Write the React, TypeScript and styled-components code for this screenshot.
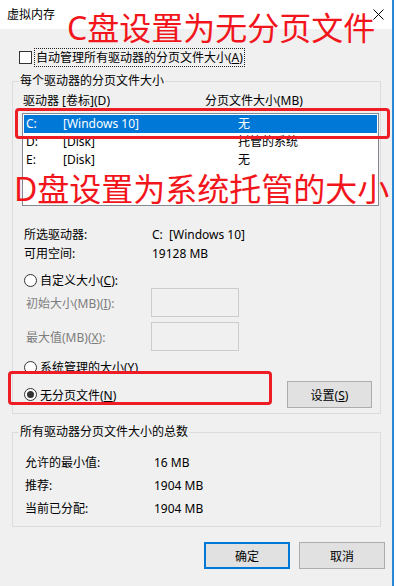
import React from "react";
import styled, { createGlobalStyle } from "styled-components";

const GlobalStyle = createGlobalStyle`
	html, body {
		margin: 0;
		padding: 0;
		background: #ffffff;
	}
	body {
		font-family: "Noto Sans", "Noto Sans CJK SC", sans-serif;
		font-size: 12px;
		color: #000000;
	}
`;

const Screen = styled.div`
	position: relative;
	width: 396px;
	height: 586px;
	display: flex;
	overflow: hidden;
	background: #ffffff;
`;

const Window = styled.div`
	width: 392px;
	display: flex;
	flex-direction: column;
`;

const Edge = styled.div`
	width: 2px;
	background: #2b86d6;
`;

const TitleBar = styled.div`
	height: 29px;
	box-sizing: border-box;
	background: #ffffff;
	display: flex;
	align-items: center;
	justify-content: space-between;
	padding: 0 8px 1px 7px;
`;

const Body = styled.div`
	flex: 1;
	background: #f0f0f0;
	padding-left: 12px;
	display: flex;
	flex-direction: column;
`;

const CheckRow = styled.div`
	margin-top: 19px;
	height: 19px;
	display: flex;
	align-items: center;
	padding-left: 7px;
`;

const CheckBox = styled.span`
	width: 13px;
	height: 13px;
	box-sizing: border-box;
	border: 1px solid #333333;
	background: #ffffff;
`;

const FocusLabel = styled.span`
	margin-left: 2px;
	height: 19px;
	box-sizing: border-box;
	border: 1px dotted #222222;
	padding: 0 1px;
	line-height: 17px;
`;

const GroupBox = styled.div<{ $top: number; $pad: string }>`
	margin-top: ${p => p.$top}px;
	width: 369px;
	box-sizing: border-box;
	border: 1px solid #dcdcdc;
	padding: ${p => p.$pad};
	display: flex;
	flex-direction: column;
`;

const GroupTitle = styled.div`
	margin: -9px 0 0 -3px;
	padding: 0 1px;
	height: 16px;
	line-height: 16px;
	width: fit-content;
	background: #f0f0f0;
`;

const HeaderRow = styled.div`
	margin-top: 4px;
	height: 16px;
	line-height: 16px;
	padding-left: 1px;
	display: grid;
	grid-template-columns: 182px 1fr;
`;

const ListBox = styled.div`
	margin-top: 4px;
	height: 93px;
	box-sizing: border-box;
	border: 1px solid #828790;
	background: #ffffff;
	padding: 1px;
`;

const ListRow = styled.div<{ $selected?: boolean }>`
	height: 18px;
	line-height: 18px;
	padding-left: 2px;
	display: grid;
	grid-template-columns: 37px 175px 1fr;
	background: ${p => (p.$selected ? "#0078d7" : "transparent")};
	color: ${p => (p.$selected ? "#ffffff" : "#000000")};
`;

const InfoRow = styled.div<{ $top?: number; $h: number; $indent: number; $col: number }>`
	margin-top: ${p => p.$top ?? 0}px;
	height: ${p => p.$h}px;
	line-height: ${p => p.$h}px;
	padding-left: ${p => p.$indent}px;
	display: grid;
	grid-template-columns: ${p => p.$col}px 1fr;
`;

const RadioRow = styled.div<{ $top: number; $h: number }>`
	margin-top: ${p => p.$top}px;
	height: ${p => p.$h}px;
	display: flex;
	align-items: center;
	padding-left: 2px;
`;

const Radio = styled.span<{ $checked?: boolean }>`
	width: 13px;
	height: 13px;
	box-sizing: border-box;
	border-radius: 50%;
	border: 1px solid #333333;
	background: #ffffff;
	margin-right: 3px;
	display: flex;
	align-items: center;
	justify-content: center;
	&::after {
		content: "";
		width: 7px;
		height: 7px;
		border-radius: 50%;
		background: ${p => (p.$checked ? "#333333" : "transparent")};
	}
`;

const FieldRow = styled.div<{ $top: number }>`
	margin-top: ${p => p.$top}px;
	height: 29px;
	display: flex;
	align-items: center;
	padding-left: 4px;
`;

const FieldLabel = styled.span`
	width: 125px;
	color: #7d7d7d;
`;

const FieldInput = styled.span`
	width: 88px;
	height: 29px;
	box-sizing: border-box;
	border: 1px solid #cccccc;
	background: #f0f0f0;
`;

const Button = styled.button<{ $default?: boolean; $w: number }>`
	width: ${p => p.$w}px;
	height: 27px;
	box-sizing: border-box;
	margin: 0;
	padding: 0;
	font-family: inherit;
	font-size: 12px;
	color: #000000;
	background: #e1e1e1;
	border: ${p => (p.$default ? "2px solid #0078d7" : "1px solid #adadad")};
	border-radius: 0;
`;

const SetButton = styled(Button)`
	margin-left: auto;
	margin-right: 7px;
`;

const ButtonRow = styled.div`
	margin-top: 15px;
	display: flex;
	justify-content: flex-end;
	gap: 9px;
	padding-right: 7px;
`;

const RedFrame = styled.div<{ $x: number; $y: number; $w: number; $h: number }>`
	position: absolute;
	left: ${p => p.$x}px;
	top: ${p => p.$y}px;
	width: ${p => p.$w}px;
	height: ${p => p.$h}px;
	box-sizing: border-box;
	border: 3px solid #ee1c24;
	border-radius: 4px;
`;

const RedNote = styled.div<{ $x: number; $y: number }>`
	position: absolute;
	left: ${p => p.$x}px;
	top: ${p => p.$y}px;
	font-family: "Noto Sans", "Noto Sans CJK SC", sans-serif;
	font-size: 32px;
	line-height: 32px;
	color: #f2161c;
	white-space: nowrap;
`;

const CloseIcon = () => (
	<svg width="11" height="11" viewBox="0 0 11 11">
		<path d="M0.5 0.5 L10.5 10.5 M10.5 0.5 L0.5 10.5" stroke="#000" strokeWidth="1" />
	</svg>
);

const drives = [
	{ letter: "C:", label: "[Windows 10]", size: "无", selected: true },
	{ letter: "D:", label: "[Disk]", size: "托管的系统" },
	{ letter: "E:", label: "[Disk]", size: "无" },
];

export default function App() {
	return (
		<Screen>
			<GlobalStyle />
			<Window>
				<TitleBar>
					<span>虚拟内存</span>
					<CloseIcon />
				</TitleBar>
				<Body>
					<CheckRow>
						<CheckBox />
						<FocusLabel>
							自动管理所有驱动器的分页文件大小(<u>A</u>)
						</FocusLabel>
					</CheckRow>

					<GroupBox $top={14} $pad="0 1px 5px 9px">
						<GroupTitle>每个驱动器的分页文件大小</GroupTitle>
						<HeaderRow>
							<span>驱动器 [卷标](D)</span>
							<span>分页文件大小(MB)</span>
						</HeaderRow>
						<ListBox>
							{drives.map(d => (
								<ListRow key={d.letter} $selected={d.selected}>
									<span>{d.letter}</span>
									<span>{d.label}</span>
									<span>{d.size}</span>
								</ListRow>
							))}
						</ListBox>
						<InfoRow $top={19} $h={19} $indent={2} $col={128}>
							<span>所选驱动器:</span>
							<span>C:&nbsp;&nbsp;[Windows 10]</span>
						</InfoRow>
						<InfoRow $h={19} $indent={2} $col={128}>
							<span>可用空间:</span>
							<span>19128 MB</span>
						</InfoRow>
						<RadioRow $top={9} $h={16}>
							<Radio />
							<span>
								自定义大小(<u>C</u>):
							</span>
						</RadioRow>
						<FieldRow $top={0}>
							<FieldLabel>
								初始大小(MB)(<u>I</u>):
							</FieldLabel>
							<FieldInput />
						</FieldRow>
						<FieldRow $top={5}>
							<FieldLabel>
								最大值(MB)(<u>X</u>):
							</FieldLabel>
							<FieldInput />
						</FieldRow>
						<RadioRow $top={8} $h={16}>
							<Radio />
							<span>
								系统管理的大小(<u>Y</u>)
							</span>
						</RadioRow>
						<RadioRow $top={6} $h={27}>
							<Radio $checked />
							<span>
								无分页文件(<u>N</u>)
							</span>
							<SetButton $w={85}>
								设置(<u>S</u>)
							</SetButton>
						</RadioRow>
					</GroupBox>

					<GroupBox $top={18} $pad="0 1px 6px 9px">
						<GroupTitle>所有驱动器分页文件大小的总数</GroupTitle>
						<InfoRow $top={11} $h={23} $indent={3} $col={129}>
							<span>允许的最小值:</span>
							<span>16 MB</span>
						</InfoRow>
						<InfoRow $h={23} $indent={3} $col={129}>
							<span>推荐:</span>
							<span>1904 MB</span>
						</InfoRow>
						<InfoRow $h={23} $indent={3} $col={129}>
							<span>当前已分配:</span>
							<span>1904 MB</span>
						</InfoRow>
					</GroupBox>

					<ButtonRow>
						<Button $default $w={86}>确定</Button>
						<Button $w={86}>取消</Button>
					</ButtonRow>
				</Body>
			</Window>
			<Edge />

			<RedNote $x={67} $y={12}>C盘设置为无分页文件</RedNote>
			<RedFrame $x={15} $y={108} $w={375} $h={31} />
			<RedNote $x={14} $y={173}>D盘设置为系统托管的大小</RedNote>
			<RedFrame $x={8} $y={371} $w={264} $h={34} />
		</Screen>
	);
}
